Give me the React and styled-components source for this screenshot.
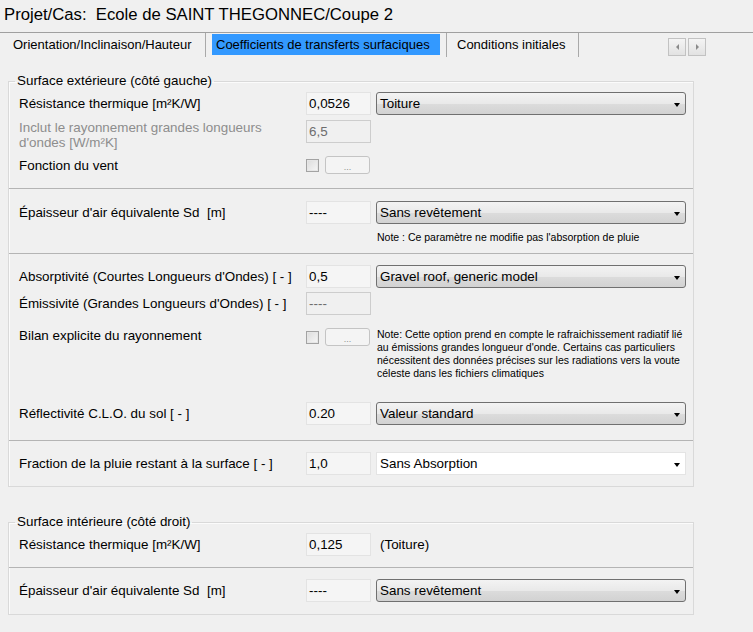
import React from "react";
import styled, { createGlobalStyle } from "styled-components";

const GlobalStyle = createGlobalStyle`
  html, body { margin: 0; padding: 0; background: #f0f0f0; }
  body {
    font-family: "Liberation Sans", Arial, Helvetica, sans-serif;
    font-size: 13.4px;
    color: #000;
  }
  * { box-sizing: border-box; }
`;

const Page = styled.div`
  width: 753px;
  height: 632px;
  overflow: hidden;
  background: #f0f0f0;
`;

const TitleBar = styled.div`
  height: 33px;
  border-bottom: 1px solid #a0a0a0;
  padding: 4px 0 0 4px;
  font-size: 16.7px;
  line-height: 22px;
  white-space: pre;
`;

const TabStrip = styled.div`
  display: flex;
  height: 24px;
  padding-left: 3px;
  font-size: 13px;
`;

const Tab = styled.div`
  display: flex;
  height: 24px;
  padding: 0 6px;
  border-right: 1px solid #a9a9a9;
`;

const TabLabel = styled.div`
  width: ${(p) => p.$w}px;
  height: 21px;
  margin-top: 1px;
  padding: 0 4px;
  line-height: 21px;
  white-space: nowrap;
  background: ${(p) => (p.$active ? "#3399ff" : "transparent")};
`;

const ScrollArrows = styled.div`
  display: flex;
  gap: 2px;
  margin: 5px 47px 0 auto;
  height: 18px;
`;

const ArrowButton = styled.div`
  width: 18px;
  height: 18px;
  border: 1px solid #c2c2c2;
  background: linear-gradient(#f4f4f4, #e2e2e2);
  display: flex;
  align-items: center;
  justify-content: center;
`;

const Tri = styled.span`
  width: 0;
  height: 0;
  border-top: 3px solid transparent;
  border-bottom: 3px solid transparent;
  ${(p) =>
    p.$dir === "left"
      ? "border-right: 3px solid #8a8a8a;"
      : "border-left: 3px solid #8a8a8a;"}
`;

const Group = styled.fieldset`
  margin: ${(p) => p.$mt}px 0 0 8px;
  width: 686px;
  padding: 0;
  min-width: 0;
  border: 1px solid #d9d9d9;
  box-shadow: inset 1px 1px 0 #fbfbfb;
`;

const Legend = styled.legend`
  margin-left: 6px;
  padding: 0 2px;
  font-size: 13.4px;
  line-height: 14px;
`;

const Section = styled.div`
  padding: ${(p) => p.$pt}px 0 ${(p) => p.$pb}px 0;
  & + & {
    border-top: 1px solid #b4b4b4;
  }
`;

const Row = styled.div`
  display: grid;
  grid-template-columns: 282px 65px 310px;
  column-gap: 5px;
  padding-left: 10px;
  margin-top: ${(p) => p.$mt || 0}px;
  height: ${(p) => p.$h}px;
  align-items: ${(p) => p.$align || "center"};
`;

const Label = styled.div`
  line-height: 15px;
  color: ${(p) => (p.$muted ? "#8d8d8d" : "#000")};
  white-space: nowrap;
`;

const TextField = styled.div`
  height: 23px;
  border: 1px solid ${(p) => (p.$disabled ? "#cdcdcd" : "#e3e3e3")};
  background: ${(p) => (p.$disabled ? "#f0f0f0" : "#f5f5f5")};
  color: ${(p) => (p.$disabled ? "#6d6d6d" : "#000")};
  padding-left: 2px;
  line-height: 21px;
  white-space: nowrap;
`;

const Combo = styled.div`
  display: flex;
  align-items: center;
  justify-content: space-between;
  height: 23px;
  padding: 0 5px 0 3px;
  border: 1px solid ${(p) => (p.$flat ? "#e4e4e4" : "#707070")};
  border-radius: ${(p) => (p.$flat ? 0 : 3)}px;
  background: ${(p) =>
    p.$flat ? "#ffffff" : "linear-gradient(#f3f3f3 0%, #e9e9e9 50%, #dcdcdc 51%, #d2d2d2 100%)"};
  white-space: nowrap;
`;

const ComboArrow = styled.span`
  width: 0;
  height: 0;
  border-left: 3.5px solid transparent;
  border-right: 3.5px solid transparent;
  border-top: 4px solid #000;
  margin-top: 2px;
`;

const Controls = styled.div`
  display: flex;
  align-items: center;
  gap: 6px;
  height: 18px;
`;

const CheckBox = styled.span`
  width: 13px;
  height: 13px;
  border: 1px solid #a3a3a3;
  background: linear-gradient(135deg, #dcdcdc, #f7f7f7);
  box-shadow: inset 0 0 0 1px #e6e6e6;
`;

const DotsButton = styled.div`
  width: 45px;
  height: 18px;
  border: 1px solid #c4c4c4;
  border-radius: 3px;
  background: #f4f4f4;
  color: #909090;
  font-size: 9px;
  line-height: 20px;
  text-align: center;
`;

const Note = styled.div`
  grid-column: 3;
  font-size: 10.5px;
  line-height: 13px;
  white-space: nowrap;
  padding-left: 1px;
`;

const PlainValue = styled.div`
  grid-column: 3;
  padding-left: 4px;
`;

function ComboBox({ value, flat }) {
  return (
    <Combo $flat={flat}>
      <span>{value}</span>
      <ComboArrow />
    </Combo>
  );
}

export default function App() {
  return (
    <Page>
      <GlobalStyle />
      <TitleBar>{"Projet/Cas:  Ecole de SAINT THEGONNEC/Coupe 2"}</TitleBar>
      <TabStrip>
        <Tab>
          <TabLabel $w={190}>Orientation/Inclinaison/Hauteur</TabLabel>
        </Tab>
        <Tab>
          <TabLabel $w={228} $active>
            Coefficients de transferts surfaciques
          </TabLabel>
        </Tab>
        <Tab>
          <TabLabel $w={119}>Conditions initiales</TabLabel>
        </Tab>
        <ScrollArrows>
          <ArrowButton>
            <Tri $dir="left" />
          </ArrowButton>
          <ArrowButton>
            <Tri $dir="right" />
          </ArrowButton>
        </ScrollArrows>
      </TabStrip>

      <Group $mt={17}>
        <Legend>Surface extérieure (côté gauche)</Legend>
        <Section $pt={4} $pb={14}>
          <Row $h={23}>
            <Label>Résistance thermique [m²K/W]</Label>
            <TextField>0,0526</TextField>
            <ComboBox value="Toiture" />
          </Row>
          <Row $h={30} $mt={5} $align="start">
            <Label $muted>
              Inclut le rayonnement grandes longueurs
              <br />
              d'ondes [W/m²K]
            </Label>
            <TextField $disabled>6,5</TextField>
          </Row>
          <Row $h={18} $mt={6}>
            <Label>Fonction du vent</Label>
            <Controls>
              <CheckBox />
              <DotsButton>...</DotsButton>
            </Controls>
          </Row>
        </Section>
        <Section $pt={12} $pb={9}>
          <Row $h={23}>
            <Label>Épaisseur d'air équivalente Sd&nbsp; [m]</Label>
            <TextField>----</TextField>
            <ComboBox value="Sans revêtement" />
          </Row>
          <Row $h={13} $mt={7}>
            <Note>Note : Ce paramètre ne modifie pas l'absorption de pluie</Note>
          </Row>
        </Section>
        <Section $pt={11} $pb={15}>
          <Row $h={23}>
            <Label>Absorptivité (Courtes Longueurs d'Ondes) [ - ]</Label>
            <TextField>0,5</TextField>
            <ComboBox value="Gravel roof, generic model" />
          </Row>
          <Row $h={23} $mt={4}>
            <Label>Émissivité (Grandes Longueurs d'Ondes) [ - ]</Label>
            <TextField $disabled>----</TextField>
          </Row>
          <Row $h={52} $mt={13} $align="start">
            <Label>Bilan explicite du rayonnement</Label>
            <Controls>
              <CheckBox />
              <DotsButton>...</DotsButton>
            </Controls>
            <Note>
              Note: Cette option prend en compte le rafraichissement radiatif lié
              <br />
              au émissions grandes longueur d'onde. Certains cas particuliers
              <br />
              nécessitent des données précises sur les radiations vers la voute
              <br />
              céleste dans les fichiers climatiques
            </Note>
          </Row>
          <Row $h={23} $mt={22}>
            <Label>Réflectivité C.L.O. du sol [ - ]</Label>
            <TextField>0.20</TextField>
            <ComboBox value="Valeur standard" />
          </Row>
        </Section>
        <Section $pt={11} $pb={11}>
          <Row $h={23}>
            <Label>Fraction de la pluie restant à la surface [ - ]</Label>
            <TextField>1,0</TextField>
            <ComboBox value="Sans Absorption" flat />
          </Row>
        </Section>
      </Group>

      <Group $mt={28}>
        <Legend>Surface intérieure (côté droit)</Legend>
        <Section $pt={4} $pb={11}>
          <Row $h={23}>
            <Label>Résistance thermique [m²K/W]</Label>
            <TextField>0,125</TextField>
            <PlainValue>(Toiture)</PlainValue>
          </Row>
        </Section>
        <Section $pt={11} $pb={12}>
          <Row $h={23}>
            <Label>Épaisseur d'air équivalente Sd&nbsp; [m]</Label>
            <TextField>----</TextField>
            <ComboBox value="Sans revêtement" />
          </Row>
        </Section>
      </Group>
    </Page>
  );
}
